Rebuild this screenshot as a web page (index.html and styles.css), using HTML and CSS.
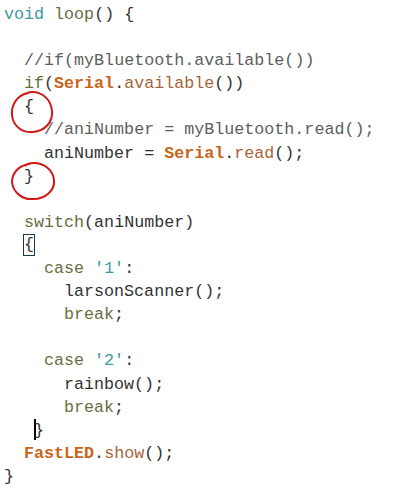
FILE: index.html
```html
<!DOCTYPE html>
<html>
<head>
<meta charset="utf-8">
<link rel="stylesheet" href="styles.css">
</head>
<body>
<div class="editor">
  <div class="code">
    <div class="ln"><span class="kw1">void</span> <span class="kw3">loop</span><span>() {</span></div>
    <div class="ln"></div>
    <div class="ln i1"><span class="cm">//if(myBluetooth.available())</span></div>
    <div class="ln i1"><span class="kw3">if</span><span>(</span><span class="lib">Serial</span><span>.</span><span class="fn">available</span><span>())</span></div>
    <div class="ln i1"><span>{</span></div>
    <div class="ln i2"><span class="cm">//aniNumber = myBluetooth.read();</span></div>
    <div class="ln i2"><span>aniNumber = </span><span class="lib">Serial</span><span>.</span><span class="fn">read</span><span>();</span></div>
    <div class="ln i1"><span>}</span></div>
    <div class="ln"></div>
    <div class="ln i1"><span class="kw3">switch</span><span>(aniNumber)</span></div>
    <div class="ln i1"><span class="match">{</span></div>
    <div class="ln i2"><span class="kw3">case</span> <span class="str">'1'</span><span>:</span></div>
    <div class="ln i3"><span>larsonScanner();</span></div>
    <div class="ln i3"><span class="kw3">break</span><span>;</span></div>
    <div class="ln"></div>
    <div class="ln i2"><span class="kw3">case</span> <span class="str">'2'</span><span>:</span></div>
    <div class="ln i3"><span>rainbow();</span></div>
    <div class="ln i3"><span class="kw3">break</span><span>;</span></div>
    <div class="ln i1h"><span class="caret"></span><span>}</span></div>
    <div class="ln i1"><span class="lib">FastLED</span><span>.</span><span class="fn">show</span><span>();</span></div>
    <div class="ln"><span>}</span></div>
  </div>
  <svg class="marks" width="403" height="500" viewBox="0 0 403 500">
    <path d="M28 93 C18 95 11 104 12 115 C13 126 22 133 33 132 C45 131 53 122 52 111 C51 100 43 92 32 92 C29 92 27 93 26 94" fill="none" stroke="#d01818" stroke-width="2"/>
    <path d="M30 164 C19 165 12 173 12 182 C13 192 22 200 33 199 C46 199 55 190 54 180 C53 170 44 163 34 163 C30 163 27 164 25 166" fill="none" stroke="#d01818" stroke-width="2"/>
  </svg>
</div>
</body>
</html>
```
FILE: styles.css
```css
html, body {
  margin: 0;
  padding: 0;
  background: #ffffff;
}
.editor {
  position: relative;
  width: 403px;
  height: 500px;
  overflow: hidden;
}
.code {
  padding: 3px 0 0 4px;
  font-family: "Courier New", "Nimbus Mono PS", "FreeMono", "Liberation Mono", monospace;
  font-size: 16.7px;
  line-height: 23.1px;
  color: #333333;
}
.ln {
  height: 23.1px;
  white-space: pre;
}
.i1 { padding-left: 20px; }
.i1h { padding-left: 30px; }
.i2 { padding-left: 40px; }
.i3 { padding-left: 60px; }
.kw1 { color: #3a9a9c; }
.kw3 { color: #6a6e3e; }
.lib { color: #c8651a; font-weight: bold; }
.fn { color: #a8653a; }
.cm { color: #5e5e5e; }
.str { color: #3a9aa8; }
.match {
  display: inline-block;
  outline: 1px solid #1a3a4a;
  line-height: 20px;
  height: 20px;
  vertical-align: top;
  margin-top: 1px;
}
.caret {
  display: inline-block;
  width: 2px;
  height: 21px;
  background: #000;
  vertical-align: top;
  margin-right: -2px;
}
.marks {
  position: absolute;
  left: 0;
  top: 0;
  pointer-events: none;
}
```
